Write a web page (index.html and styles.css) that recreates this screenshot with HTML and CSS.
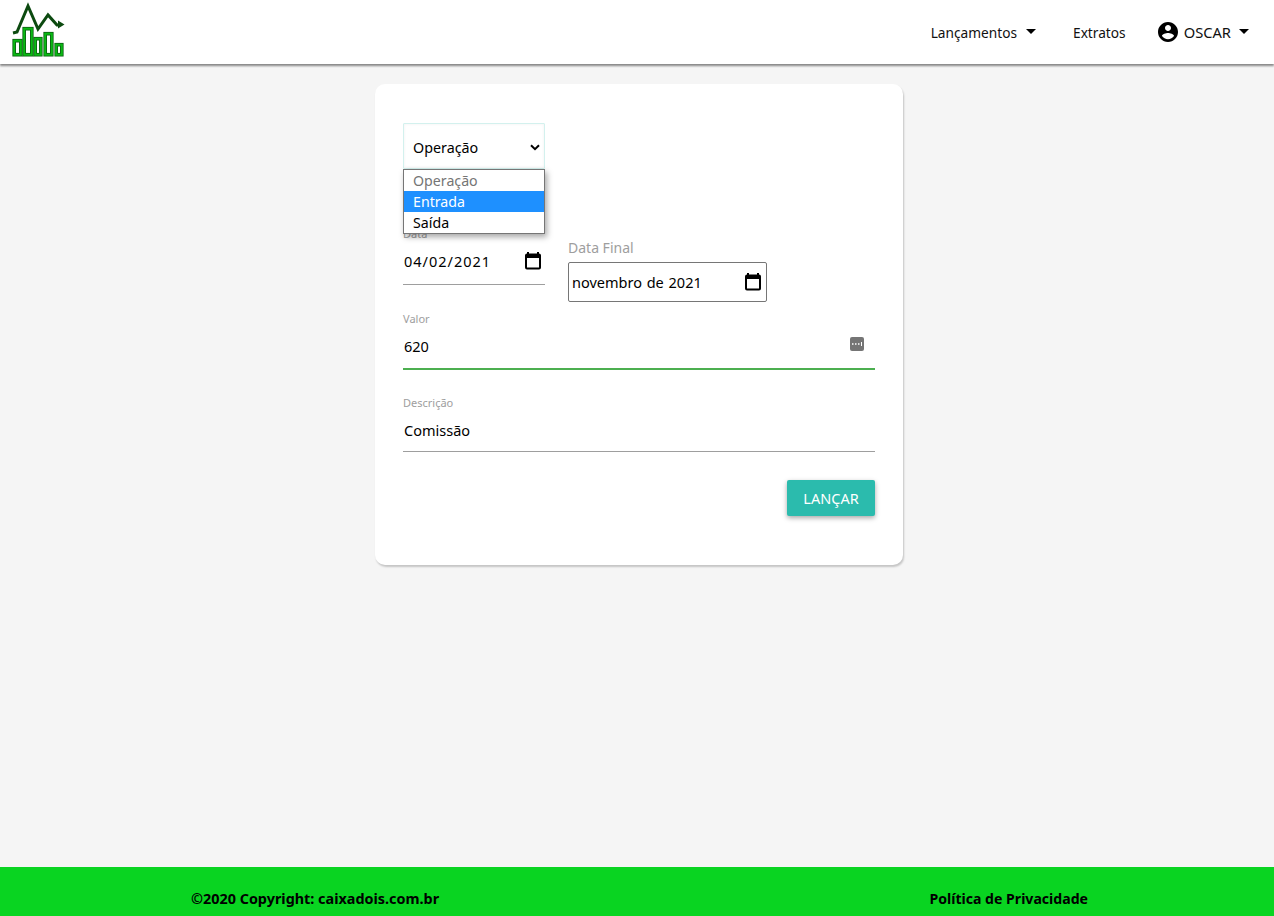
FILE: index.html
```html
<!DOCTYPE html>
<html>

<head>
  <meta charset="UTF-8">
  <title>Caixa Dois</title>
  <link rel="stylesheet" href="styles.css">
</head>

<body>
  <nav class="navbar">
    <a class="logo" href="#">
      <svg width="56" height="58" viewBox="0 0 56 58">
        <path d="M3 31L7 30L18 4L28 27L38 13L47 23H50" fill="none" stroke="#0c4a10" stroke-width="3" />
        <path d="M48 18.500L54.500 22.500L48 26.500Z" fill="#0c4a10" />
        <g fill="#fff" stroke="#0b5c10" stroke-width="3.600">
          <rect x="4.200" y="38.700" width="6.600" height="14" />
          <rect x="14.200" y="26.700" width="7.600" height="26" />
          <rect x="25.200" y="36.700" width="5.600" height="16" />
          <rect x="35.200" y="31.700" width="6.600" height="21" />
          <rect x="46.200" y="42.700" width="5.600" height="10" />
        </g>
        <g fill="none" stroke="#0ab814" stroke-width="2">
          <rect x="4.200" y="38.700" width="6.600" height="14" />
          <rect x="14.200" y="26.700" width="7.600" height="26" />
          <rect x="25.200" y="36.700" width="5.600" height="16" />
          <rect x="35.200" y="31.700" width="6.600" height="21" />
          <rect x="46.200" y="42.700" width="5.600" height="10" />
        </g>
      </svg>
    </a>
    <ul class="nav-links">
      <li class="nav-item">Lançamentos <span class="caret"></span></li>
      <li class="nav-item">Extratos</li>
      <li class="nav-item user">
        <svg width="24" height="24" viewBox="0 0 24 24">
          <path d="M12 2C6.480 2 2 6.480 2 12s4.480 10 10 10 10-4.480 10-10S17.520 2 12 2zm0 3c1.660 0 3 1.340 3 3s-1.340 3-3 3-3-1.340-3-3 1.340-3 3-3zm0 14.200c-2.500 0-4.710-1.280-6-3.220.030-1.990 4-3.080 6-3.080 1.990 0 5.970 1.090 6 3.080-1.290 1.940-3.500 3.220-6 3.220z" />
        </svg>
        <span class="user-name">OSCAR</span> <span class="caret"></span>
      </li>
    </ul>
  </nav>

  <main class="content">
    <form class="card">
      <div class="select-wrap">
        <div class="select-box">
          <span>Operação</span>
          <svg width="10" height="7" viewBox="0 0 10 7">
            <path d="M1 1.200L5 5.200L9 1.200" fill="none" stroke="#000" stroke-width="2" />
          </svg>
        </div>
        <ul class="select-list">
          <li class="placeholder">Operação</li>
          <li class="selected">Entrada</li>
          <li>Saída</li>
        </ul>
      </div>

      <div class="dates">
        <div class="field date-field">
          <label>Data</label>
          <div class="field-row">
            <span class="date-value">04/02/2021</span>
            <svg class="calendar" width="18" height="20" viewBox="0 0 18 20">
              <path d="M4 1V3M14 1V3" stroke="#000" stroke-width="2" />
              <rect x="2" y="3.500" width="14" height="14" rx="1" fill="none" stroke="#000" stroke-width="2" />
              <rect x="2" y="3" width="14" height="4" fill="#000" />
            </svg>
          </div>
        </div>
        <div class="month-field">
          <label>Data Final</label>
          <div class="month-box">
            <span class="month-value">novembro de 2021</span>
            <svg class="calendar" width="18" height="20" viewBox="0 0 18 20">
              <path d="M4 1V3M14 1V3" stroke="#000" stroke-width="2" />
              <rect x="2" y="3.500" width="14" height="14" rx="1" fill="none" stroke="#000" stroke-width="2" />
              <rect x="2" y="3" width="14" height="4" fill="#000" />
            </svg>
          </div>
        </div>
      </div>

      <div class="field valor">
        <label>Valor</label>
        <div class="field-row">
          <span>620</span>
          <svg class="pass-icon" width="14" height="14" viewBox="0 0 14 14">
            <rect width="14" height="14" rx="2" fill="#757575" />
            <path d="M2 7H3.500M5 7H6.500M8 7H9.500" stroke="#fff" stroke-width="1.500" />
            <path d="M11.500 5V9" stroke="#fff" />
          </svg>
        </div>
      </div>

      <div class="field descricao">
        <label>Descrição</label>
        <div class="field-row">
          <span>Comissão</span>
        </div>
      </div>

      <div class="actions">
        <button type="button" class="btn">LANÇAR</button>
      </div>
    </form>
  </main>

  <footer class="footer">
    <span class="copyright">©2020 Copyright: caixadois.com.br</span>
    <span class="privacy">Política de Privacidade</span>
  </footer>
</body>

</html>
```

FILE: styles.css
```css
* {
  box-sizing: border-box;
}

html,
body {
  height: 100%;
}

body {
  margin: 0;
  display: flex;
  flex-direction: column;
  font-family: "Noto Sans", "Open Sans", Arial, sans-serif;
  font-size: 14.500px;
  color: #000;
  background-color: #f5f5f5;
}

.navbar {
  height: 64px;
  flex-shrink: 0;
  display: flex;
  justify-content: space-between;
  background-color: #fff;
  box-shadow: 0 2px 2px rgba(0, 0, 0, 0.45);
}

.logo {
  display: block;
  padding: 2px 0 0 10px;
  height: 60px;
}

.nav-links {
  display: flex;
  align-items: center;
  list-style: none;
  margin: 0;
  padding: 0 25px 0 0;
  font-size: 13.700px;
  color: #111;
}

.nav-item {
  display: flex;
  align-items: center;
  gap: 5px;
  margin-left: 37px;
}

.user {
  gap: 4px;
  margin-left: 30px;
}

.user-name {
  font-size: 14.700px;
}

.caret {
  display: inline-block;
  width: 0;
  height: 0;
  margin-left: 4px;
  margin-top: -2px;
  border-left: 5px solid transparent;
  border-right: 5px solid transparent;
  border-top: 5px solid #000;
}

.content {
  flex: 1;
  padding: 20px 0 0 4px;
  display: flex;
  justify-content: center;
  align-items: flex-start;
}

.card {
  width: 528px;
  height: 481px;
  padding: 39px 28px 0;
  background-color: #fff;
  border-radius: 10px;
  box-shadow: 1px 2px 2px rgba(0, 0, 0, 0.2);
}

.select-wrap {
  position: relative;
  width: 142px;
  height: 103px;
}

.select-box {
  height: 46px;
  display: flex;
  align-items: center;
  justify-content: space-between;
  padding: 2px 4px 0 9px;
  border: 1px solid #d3f1ee;
  border-radius: 1px;
  font-size: 14.300px;
  box-shadow: inset 0 0 3px rgba(0, 0, 0, 0.06);
}

.select-list {
  position: absolute;
  top: 46px;
  left: 0;
  width: 142px;
  margin: 0;
  padding: 0;
  list-style: none;
  font-size: 14.200px;
  background-color: #fff;
  border: 1px solid #767676;
  box-shadow: 2px 3px 6px rgba(0, 0, 0, 0.35);
  z-index: 2;
}

.select-list li {
  height: 21px;
  line-height: 21px;
  padding-left: 9px;
}

.select-list .placeholder {
  color: #757575;
}

.select-list .selected {
  background-color: #1e90ff;
  color: #fff;
}

label {
  display: block;
  color: #9e9e9e;
}

.dates {
  display: flex;
  align-items: flex-start;
  gap: 23px;
}

.field label {
  font-size: 11px;
  line-height: 14px;
}

.field-row {
  display: flex;
  align-items: center;
  justify-content: space-between;
  padding-left: 1px;
  border-bottom: 1px solid #9e9e9e;
}

.date-field {
  width: 142px;
  margin-top: 1px;
}

.date-field .field-row {
  height: 44px;
  padding-bottom: 3px;
  padding-right: 3px;
}

.date-value {
  letter-spacing: 1px;
}

.month-value {
  word-spacing: 1px;
}

.month-field label {
  font-size: 14px;
  line-height: 19px;
  margin-top: 12px;
  margin-bottom: 5px;
}

.month-box {
  width: 199px;
  height: 40px;
  display: flex;
  align-items: center;
  justify-content: space-between;
  padding: 0 4px 0 3px;
  border: 1px solid #767676;
  border-radius: 2px;
}

.valor {
  margin-top: 9px;
}

.valor label {
  line-height: 16px;
}

.valor .field-row {
  height: 43px;
  padding-bottom: 4px;
  padding-right: 11px;
  border-bottom: 2px solid #4caf50;
}

.pass-icon {
  margin-top: -3px;
}

.descricao {
  margin-top: 26px;
}

.descricao .field-row {
  height: 42px;
  padding-bottom: 2px;
}

.actions {
  display: flex;
  justify-content: flex-end;
  margin-top: 28px;
}

.btn {
  width: 88px;
  height: 36px;
  border: none;
  border-radius: 2px;
  font-family: inherit;
  font-size: 14.500px;
  color: #fff;
  background-color: #2bbbad;
  box-shadow: 0 2px 5px rgba(0, 0, 0, 0.35);
}

.footer {
  height: 49px;
  flex-shrink: 0;
  display: flex;
  align-items: center;
  justify-content: space-between;
  padding: 13px 186px 0 191px;
  font-weight: 700;
  background-color: #09d421;
}

.copyright {
  font-size: 14.400px;
}

.privacy {
  font-size: 14.100px;
}
```
